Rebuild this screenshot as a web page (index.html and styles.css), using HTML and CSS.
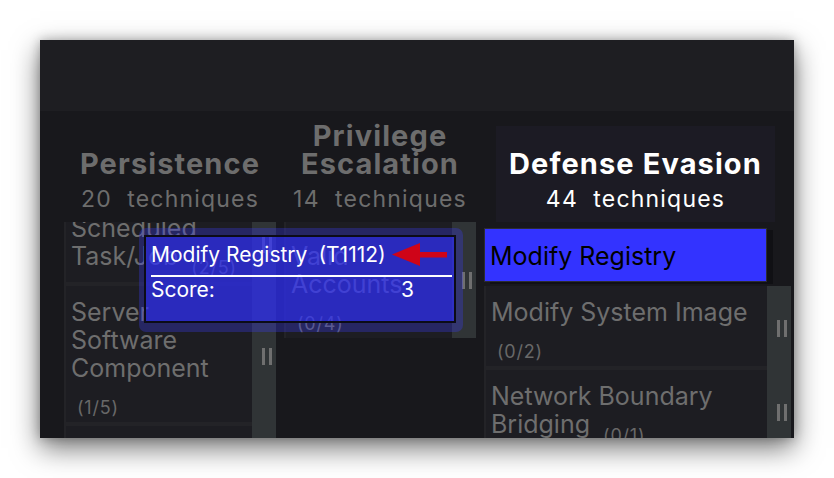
FILE: index.html
```html
<!DOCTYPE html>
<html lang="en">
<head>
<meta charset="utf-8">
<title>ATT&amp;CK Navigator</title>
<link rel="stylesheet" href="styles.css">
</head>
<body>
<div class="window">
  <div class="titlebar"></div>
  <div class="matrix">
    <section class="tactic">
      <header class="tactic-head">
        <div class="tactic-box">
          <h2 class="tactic-name">Persistence</h2>
          <p class="tactic-count">20  techniques</p>
        </div>
      </header>
      <div class="tactic-body">
        <ul class="techs techs--scrolled">
          <li class="row">
            <div class="cell">Scheduled Task/Job <span class="sub">(2/5)</span></div>
            <div class="handle"><span class="grip"></span></div>
          </li>
          <li class="row">
            <div class="cell">Server Software Component <span class="sub">(1/5)</span></div>
            <div class="handle"><span class="grip"></span></div>
          </li>
          <li class="row">
            <div class="cell">Traffic Signaling <span class="sub">(0/1)</span></div>
            <div class="handle"><span class="grip"></span></div>
          </li>
        </ul>
      </div>
    </section>

    <section class="tactic">
      <header class="tactic-head">
        <div class="tactic-box">
          <h2 class="tactic-name tactic-name--wrap">Privilege Escalation</h2>
          <p class="tactic-count">14  techniques</p>
        </div>
      </header>
      <div class="tactic-body">
        <ul class="techs">
          <li class="row">
            <div class="cell cell--tall cell--last">Valid Accounts <span class="sub">(0/4)</span></div>
            <div class="handle"><span class="grip"></span></div>
          </li>
        </ul>
      </div>
    </section>

    <section class="tactic tactic--active">
      <header class="tactic-head">
        <div class="tactic-box">
          <h2 class="tactic-name">Defense Evasion</h2>
          <p class="tactic-count">44  techniques</p>
        </div>
      </header>
      <div class="tactic-body">
        <ul class="techs">
          <li class="row row--selected">
            <div class="cell cell--selected">Modify Registry</div>
            <div class="handle"><span class="grip"></span></div>
          </li>
          <li class="row">
            <div class="cell">Modify System Image <span class="sub">(0/2)</span></div>
            <div class="handle"><span class="grip"></span></div>
          </li>
          <li class="row">
            <div class="cell">Network Boundary Bridging <span class="sub">(0/1)</span></div>
            <div class="handle"><span class="grip"></span></div>
          </li>
        </ul>
      </div>
    </section>
  </div>

  <div class="tip">
    <div class="tip-inner">
      <div class="tip-title">Modify Registry<span class="tip-id">(T1112)</span></div>
      <div class="tip-rule"></div>
      <div class="tip-score"><span class="tip-label">Score:</span><span class="tip-value">3</span></div>
    </div>
  </div>

  <svg class="arrow" width="56" height="23" viewBox="0 0 56 23" aria-hidden="true">
    <polygon points="0,11.5 28,0 28,23" fill="#cf0418"/>
    <rect x="26" y="9" width="29" height="5.5" fill="#cf0418"/>
  </svg>
</div>
</body>
</html>
```

FILE: styles.css
```css
* {
  box-sizing: border-box;
  margin: 0;
  padding: 0;
}

body {
  background: #ffffff;
  font-family: Inter, "Noto Sans", "Liberation Sans", sans-serif;
}

.window {
  position: relative;
  margin: 40px;
  width: 754px;
  height: 398px;
  background: #18181c;
  box-shadow: 0 10px 26px rgba(0, 0, 0, 0.55), 0 0 10px rgba(0, 0, 0, 0.25);
  overflow: hidden;
  display: flex;
  flex-direction: column;
}

.titlebar {
  flex: none;
  height: 71px;
  background: #1e1e22;
}

.matrix {
  flex: 1;
  min-height: 0;
  display: grid;
  grid-template-columns: 212px 192px 307px;
  column-gap: 8px;
  padding-left: 24px;
  overflow: hidden;
}

.tactic {
  display: flex;
  flex-direction: column;
  min-height: 0;
}

.tactic-head {
  flex: none;
  height: 111px;
  padding-top: 15px;
  display: flex;
  flex-direction: column;
}

.tactic-box {
  flex: 1;
  min-height: 0;
  display: flex;
  flex-direction: column;
  justify-content: flex-end;
  align-items: center;
  text-align: center;
  padding-bottom: 10px;
  color: #6d6d6d;
}

.tactic--active .tactic-box {
  background: #1c1b24;
  margin: 0 16px 0 12px;
  color: #ffffff;
}

.tactic-name {
  font-size: 29px;
  line-height: 28px;
  font-weight: 700;
  letter-spacing: 1.1px;
  white-space: nowrap;
}

.tactic-name--wrap {
  white-space: normal;
}

.tactic-count {
  font-size: 23px;
  line-height: 26px;
  margin-top: 8px;
  letter-spacing: 1.2px;
  white-space: pre;
}

.tactic-body {
  flex: 1;
  min-height: 0;
  overflow: hidden;
}

.techs {
  list-style: none;
}

.techs--scrolled {
  margin-top: -20px;
}

.row {
  display: flex;
}

.cell {
  flex: 1;
  min-width: 0;
  background: #1d1d22;
  border-left: 2px solid #232327;
  border-bottom: 4px solid #232327;
  padding: 12px 6px 5px 5px;
  font-size: 25px;
  line-height: 28px;
  color: #6e6e6e;
}

.cell--tall {
  padding-top: 20px;
}

.cell--last {
  border-bottom: 0;
}

.sub {
  display: inline-block;
  font-size: 18px;
  line-height: 1;
  letter-spacing: 0.8px;
  margin-left: 6px;
  vertical-align: -9px;
  color: #686868;
}

.handle {
  flex: none;
  width: 24px;
  background: #303436;
  display: flex;
  align-items: center;
  justify-content: center;
  padding-left: 5px;
}

.grip {
  width: 10px;
  height: 17px;
  border-left: 3px solid #6f6f6f;
  border-right: 3px solid #6f6f6f;
}

.row--selected .handle {
  visibility: hidden;
}

.cell--selected {
  background: #3333ff;
  color: #000000;
  border: 1px solid #2c2c33;
  margin: 6px 0 4px;
  padding: 13px 6px 11px 5px;
  box-shadow: 6px 2px 0 #101014;
}

.tip {
  position: absolute;
  left: 99px;
  top: 188px;
  width: 324px;
  height: 104px;
  border-radius: 7px;
  background: rgba(60, 60, 250, 0.3);
  padding: 7px 7px 9px 5px;
}

.tip-inner {
  height: 100%;
  border: 2px solid #0c0c16;
  background: rgba(45, 45, 255, 0.58);
  padding: 5px 2px 0 5px;
  color: #ffffff;
  font-size: 21px;
  line-height: 26px;
}

.tip-id {
  margin-left: 11px;
}

.tip-rule {
  height: 2px;
  margin-top: 7px;
  background: #ffffff;
}

.tip-score {
  display: flex;
}

.tip-label {
  width: 250px;
}

.arrow {
  position: absolute;
  left: 352px;
  top: 203px;
}
```
